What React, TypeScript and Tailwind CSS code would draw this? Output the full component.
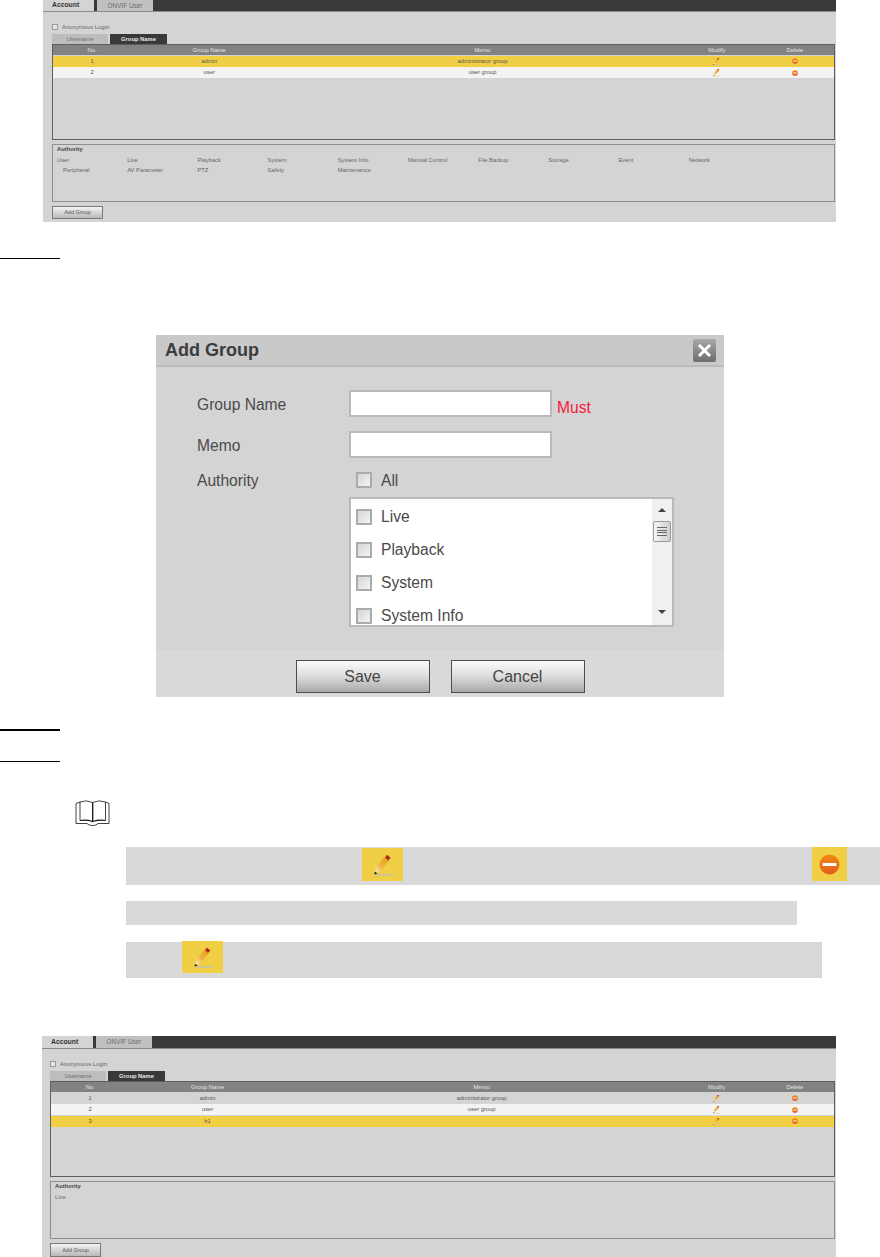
const AUTHORITY_ROWS = [
  ["User", "Live", "Playback", "System", "System Info", "Manual Control", "File Backup", "Storage", "Event", "Network"],
  ["Peripheral", "AV Parameter", "PTZ", "Safety", "Maintenance"],
];

const PANEL_ONE_ROWS = [
  { no: "1", name: "admin", memo: "administrator group", rowClass: "bg-[#f1cf45]" },
  { no: "2", name: "user", memo: "user group", rowClass: "bg-[#f3f3f3]" },
];

const PANEL_TWO_ROWS = [
  { no: "1", name: "admin", memo: "administrator group", rowClass: "bg-[#d4d4d4]" },
  { no: "2", name: "user", memo: "user group", rowClass: "bg-[#f3f3f3]" },
  { no: "3", name: "h1", memo: "", rowClass: "bg-[#f1cf45]" },
];

const LIST_ITEMS = ["Live", "Playback", "System", "System Info"];

function PencilIcon({ className, viewBox = "0 0 41 33" }: { className: string; viewBox?: string }) {
  return (
    <svg className={className} viewBox={viewBox}>
      <defs>
        <linearGradient id="pencil-body" x1="0" y1="1" x2="1" y2="0">
          <stop offset="0" stopColor="#fdeec4" />
          <stop offset="0.45" stopColor="#edb53c" />
          <stop offset="1" stopColor="#e0a020" />
        </linearGradient>
      </defs>
      <rect x="13" y="26" width="18" height="1.6" fill="#c9c4a6" />
      <path d="M13 25 L13.7 19.4 L22.2 9.1 L26.8 12.9 L18.3 23.2 Z" fill="url(#pencil-body)" />
      <path d="M23 9.6 L25 6.8 L28.6 9.8 L26.2 12.4 Z" fill="#b52a20" />
      <path d="M12.4 26.4 L12.8 23.4 L15.4 25.6 Z" fill="#1c1c1c" />
    </svg>
  );
}

function DeleteIcon({ className }: { className: string }) {
  return (
    <svg className={className} viewBox="0 0 22 22">
      <defs>
        <linearGradient id="delete-body" x1="0" y1="0" x2="0" y2="1">
          <stop offset="0" stopColor="#f5890f" />
          <stop offset="1" stopColor="#df5d20" />
        </linearGradient>
      </defs>
      <circle cx="11" cy="11" r="10.5" fill="url(#delete-body)" />
      <rect x="3.8" y="9.4" width="14.4" height="3.2" fill="#ffffff" />
    </svg>
  );
}

function BookIcon() {
  return (
    <svg className="ml-[75px] mt-[38px] block h-[26px] w-[35px]" viewBox="0 0 35 26" fill="none" stroke="#111111" strokeWidth="0.8">
      <path d="M1 3.5 L1 23.5 M34 3.5 L34 23.5" />
      <path d="M5 2 L5 20.5 M30.5 2 L30.5 20.5" />
      <path d="M17.7 2.5 L17.7 21.5" strokeWidth="1.3" />
      <path d="M1 3.5 L5 2 Q11 -0.5 17.7 2.5 Q24 -0.5 30.5 2 L34 3.5" />
      <path d="M5 20.5 Q11 19.5 17.7 21.5 Q24 19.5 30.5 20.5" strokeWidth="1.2" />
      <path d="M1 23.5 L12 23.5 Q14 25.6 17.7 25.6 Q21 25.6 23 23.5 L34 23.5" />
    </svg>
  );
}

function AccountPanel({
  rows,
  shellClass,
  barClass,
  tabsClass,
  tableClass,
  boxClass,
  buttonClass,
  authority,
}: {
  rows: { no: string; name: string; memo: string; rowClass: string }[];
  shellClass: string;
  barClass: string;
  tabsClass: string;
  tableClass: string;
  boxClass: string;
  buttonClass: string;
  authority: string[][];
}) {
  return (
    <div className={`overflow-hidden bg-[#d4d4d4] ${shellClass}`}>
      <div className={`flex border-b border-[#8a8a8a] bg-[#393939] ${barClass}`}>
        <div className="flex w-[51px] items-center pl-[9px] text-[6.8px] font-bold text-[#333333] bg-[#d4d4d4]">Account</div>
        <div className="ml-[3px] flex w-[56px] items-center justify-center bg-[#c0c0c0] text-[6.4px] text-[#6b6b6b]">ONVIF User</div>
      </div>

      <div className={`flex flex-col ${tabsClass}`}>
        <div className="mt-[12px] flex h-[6px] items-center gap-[4px]">
          <div className="h-[6px] w-[6px] border border-[#9a9a9a] bg-[#e6e6e6]" />
          <span className="text-[5.9px] text-[#666666]">Anonymous Login</span>
        </div>
        <div className="mt-[4px] flex h-[10px] gap-[2px]">
          <div className="flex w-[56px] items-center justify-center bg-[#bdbdbd] text-[5.8px] text-[#6e6e6e]">Username</div>
          <div className="flex w-[57px] items-center justify-center bg-[#393939] text-[5.8px] font-bold text-[#e8e8e8]">Group Name</div>
        </div>

        <div className={`border border-[#5e5e5e] ${tableClass}`}>
          <div className="grid h-[10px] grid-cols-[10%_20%_50%_10%_10%] items-center bg-[#828282] text-center text-[5.8px] text-[#e4e4e4]">
            <span>No.</span>
            <span>Group Name</span>
            <span>Memo</span>
            <span>Modify</span>
            <span>Delete</span>
          </div>
          {rows.map((row) => (
            <div
              key={row.no}
              className={`mt-[0.5px] grid h-[11px] grid-cols-[10%_20%_50%_10%_10%] items-center text-center text-[5.8px] text-[#555555] ${row.rowClass}`}
            >
              <span>{row.no}</span>
              <span>{row.name}</span>
              <span>{row.memo}</span>
              <span className="flex justify-center">
                <PencilIcon className="h-[9px] w-[9px]" viewBox="9 5 24 24" />
              </span>
              <span className="flex justify-center">
                <DeleteIcon className="h-[6px] w-[6px]" />
              </span>
            </div>
          ))}
        </div>

        <div className={`mt-[4px] border border-[#8f8f8f] px-[4px] pt-[1px] ${boxClass}`}>
          <div className="text-[5.8px] font-bold leading-[7px] text-[#444444]">Authority</div>
          {authority.map((line, lineIndex) => (
            <div key={lineIndex} className="mt-[3px] grid h-[7px] grid-cols-[repeat(10,70.2px)] items-center text-[5.8px] text-[#666666]">
              {line.map((label, index) => (
                <span key={label} className={lineIndex === 1 && index === 0 ? "pl-[6px]" : ""}>
                  {label}
                </span>
              ))}
            </div>
          ))}
        </div>

        <button className={`mt-[4px] flex w-[51px] items-center justify-center border border-[#7a7a7a] bg-gradient-to-b from-[#f4f4f4] to-[#b9b9b9] text-[5.5px] text-[#555555] ${buttonClass}`}>
          Add Group
        </button>
      </div>
    </div>
  );
}

function DialogCheckbox() {
  return <div className="h-[16px] w-[16px] shrink-0 border-2 border-[#ababab] bg-gradient-to-br from-[#d6d6d6] to-[#f4f4f4]" />;
}

function DialogButton({ label }: { label: string }) {
  return (
    <button className="flex h-[33px] w-[134px] items-center justify-center border border-[#4d4d4d] bg-gradient-to-b from-[#fbfbfb] via-[#dcdcdc] to-[#a9a9a9] text-[16px] text-[#444444]">
      {label}
    </button>
  );
}

function AddGroupDialog() {
  return (
    <div className="ml-[156px] mt-[76px] flex h-[362px] w-[568px] flex-col bg-[#d4d4d4]">
      <div className="flex h-[32px] shrink-0 items-center justify-between border-b-2 border-[#bbbbbb] bg-[#c9c9c9] pl-[9px] pr-[8px]">
        <span className="text-[18px] font-bold text-[#3c3c3c]">Add Group</span>
        <div className="flex h-[23px] w-[23px] items-center justify-center rounded-[2px] bg-gradient-to-b from-[#a8a8a8] to-[#6e6e6e]">
          <svg className="h-[15px] w-[15px]" viewBox="0 0 15 15" stroke="#ffffff" strokeWidth="3">
            <path d="M2 2 L13 13 M13 2 L2 13" />
          </svg>
        </div>
      </div>

      <div className="flex h-[283px] shrink-0 flex-col pl-[41px] pt-[23px] text-[15.6px] text-[#4a4a4a]">
        <div className="flex h-[27px] items-center">
          <span className="w-[152px] translate-y-[0.5px]">Group Name</span>
          <div className="h-[27px] w-[203px] border-2 border-[#b9b9b9] bg-white" />
          <span className="ml-[5px] translate-y-[4px] text-[#f5203c]">Must</span>
        </div>
        <div className="mt-[14px] flex h-[27px] items-center">
          <span className="w-[152px] translate-y-px">Memo</span>
          <div className="h-[27px] w-[203px] border-2 border-[#b9b9b9] bg-white" />
        </div>
        <div className="mt-[13px] flex h-[18px] items-center">
          <span className="w-[159px] translate-y-px">Authority</span>
          <DialogCheckbox />
          <span className="ml-[9px] translate-y-px">All</span>
        </div>
        <div className="ml-[152px] mt-[8px] flex h-[130px] w-[325px] overflow-hidden border-2 border-[#b9b9b9] bg-white">
          <div className="flex-1 overflow-hidden pl-[5px] pt-px">
            {LIST_ITEMS.map((item) => (
              <div key={item} className="flex h-[33px] items-center">
                <DialogCheckbox />
                <span className="ml-[9px]">{item}</span>
              </div>
            ))}
          </div>
          <div className="flex w-[20px] shrink-0 flex-col items-center bg-[#f0f0f0] pt-[9px]">
            <div className="h-0 w-0 border-x-[4px] border-b-[4px] border-x-transparent border-b-[#444444]" />
            <div className="mt-[9px] flex h-[21px] w-[18px] flex-col items-center justify-center gap-[1.5px] rounded-[2px] border border-[#9a9a9a] bg-gradient-to-r from-[#f6f6f6] to-[#cfcfcf]">
              <div className="h-px w-[10px] bg-[#666666]" />
              <div className="h-px w-[10px] bg-[#666666]" />
              <div className="h-px w-[10px] bg-[#666666]" />
              <div className="h-px w-[10px] bg-[#666666]" />
            </div>
            <div className="mt-[68px] h-0 w-0 border-x-[4px] border-t-[4px] border-x-transparent border-t-[#444444]" />
          </div>
        </div>
      </div>

      <div className="flex flex-1 justify-center gap-[21px] bg-[#d9d9d9] pt-[10px]">
        <DialogButton label="Save" />
        <DialogButton label="Cancel" />
      </div>
    </div>
  );
}

export default function App() {
  return (
    <div className="h-[1257px] w-[880px] overflow-hidden bg-white font-['Liberation_Sans',Arial,sans-serif]">
      <AccountPanel
        rows={PANEL_ONE_ROWS}
        shellClass="ml-[43px] h-[222px] w-[793px]"
        barClass="h-[12px]"
        tabsClass="pl-[9px] pr-[1px]"
        tableClass="h-[96px]"
        boxClass="h-[58px]"
        buttonClass="h-[13px]"
        authority={AUTHORITY_ROWS}
      />

      <div className="mt-[36px] h-px w-[60px] bg-black" />

      <AddGroupDialog />

      <div className="mt-[32px] h-[2px] w-[60px] bg-black" />
      <div className="mt-[30px] h-px w-[60px] bg-black" />

      <BookIcon />

      <div className="ml-[126px] mt-[21px] flex h-[38px] w-[754px] bg-[#d9d9d9] pl-[236px]">
        <div className="mt-px h-[33px] w-[41px] bg-[#f1cf45]">
          <PencilIcon className="h-[33px] w-[41px]" />
        </div>
        <div className="ml-[409px] flex h-[34px] w-[35px] items-center justify-center bg-[#f1cf45]">
          <DeleteIcon className="h-[21px] w-[21px]" />
        </div>
      </div>
      <div className="ml-[126px] mt-[16px] h-[24px] w-[671px] bg-[#d9d9d9]" />
      <div className="ml-[126px] mt-[17px] flex h-[36px] w-[696px] items-start bg-[#d9d9d9] pl-[56px]">
        <div className="-mt-px h-[32px] w-[41px] bg-[#f1cf45]">
          <PencilIcon className="h-[32px] w-[41px]" />
        </div>
      </div>

      <AccountPanel
        rows={PANEL_TWO_ROWS}
        shellClass="ml-[42px] mt-[58px] h-[221px] w-[794px]"
        barClass="h-[13px]"
        tabsClass="pl-[8px] pr-[1px]"
        tableClass="h-[96px]"
        boxClass="h-[58px]"
        buttonClass="h-[14px]"
        authority={[["Live"]]}
      />
    </div>
  );
}
